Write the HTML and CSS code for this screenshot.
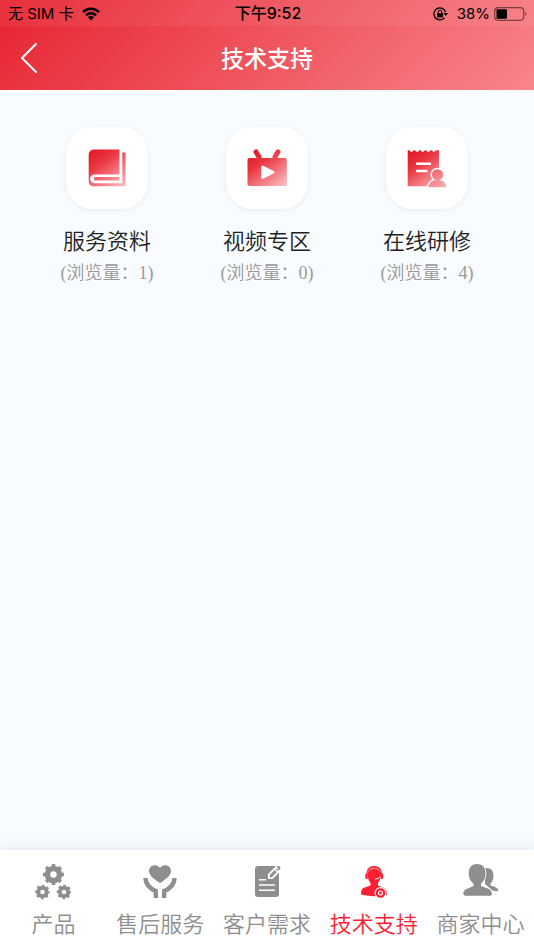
FILE: index.html
```html
<!DOCTYPE html>
<html lang="zh-CN">
<head>
<meta charset="utf-8">
<meta name="viewport" content="width=device-width, initial-scale=1">
<title>技术支持</title>
<link rel="stylesheet" href="styles.css">
</head>
<body>
<header class="header">
  <div class="status">
    <div class="status-side">
      <span>无 SIM 卡</span>
      <svg width="18" height="14" viewBox="0 0 18 14" aria-hidden="true">
        <g fill="none" stroke="#000" stroke-width="2.6">
          <path d="M1 5.2C5.5.6 12.5.6 17 5.2"/>
          <path d="M4 8.4C6.8 5.6 11.2 5.6 14 8.4"/>
        </g>
        <path d="M5.9 10.3C7.7 8.7 10.3 8.7 12.1 10.3L9 13.4Z"/>
      </svg>
    </div>
    <time class="status-time">下午9:52</time>
    <div class="status-side status-right">
      <svg class="lock" width="15" height="14" viewBox="0 0 15 14" aria-hidden="true">
        <path d="M12.6 5A6 6 0 1 0 11.5 10.8" fill="none" stroke="#000" stroke-width="1.3"/>
        <path d="M10.2 6H15L12.7 9Z"/>
        <rect x="4" y="6.2" width="6" height="4.2" rx=".5"/>
        <path d="M5.2 6.5V5a1.8 1.8 0 0 1 3.6 0V6.5" fill="none" stroke="#000"/>
      </svg>
      <span>38%</span>
      <svg width="34" height="14" viewBox="0 0 34 14" aria-hidden="true">
        <rect x=".7" y=".7" width="29" height="12.6" rx="3.5" fill="none" stroke="#000" stroke-opacity=".5" stroke-width="1.2"/>
        <rect x="2.5" y="2.3" width="10.5" height="9.4" rx="1"/>
        <path d="M31.3 4.5q2 2.5 0 5z" fill-opacity=".5"/>
      </svg>
    </div>
  </div>
  <div class="titlebar">
    <button class="back" type="button" aria-label="返回">
      <svg width="18" height="32" viewBox="0 0 18 32" aria-hidden="true"><path d="M16 2 2 16 16 30" fill="none" stroke="#fff" stroke-width="2" stroke-linecap="round" stroke-linejoin="round"/></svg>
    </button>
    <h1 class="title">技术支持</h1>
  </div>
</header>

<main class="main">
  <svg class="defs" width="0" height="0" aria-hidden="true">
    <defs>
      <linearGradient id="red" gradientUnits="userSpaceOnUse" x1="6" y1="4" x2="32" y2="40">
        <stop offset="0" stop-color="#e51c29"/><stop offset=".3" stop-color="#e93641"/><stop offset="1" stop-color="#fcb5ba"/>
      </linearGradient>
      <linearGradient id="person" gradientUnits="userSpaceOnUse" x1="26" y1="22" x2="36" y2="40">
        <stop offset="0" stop-color="#f0656e"/><stop offset="1" stop-color="#fbacb2"/>
      </linearGradient>
      <g id="gear">
        <circle r="6.3" fill="none" stroke="currentColor" stroke-width="5.8"/>
        <circle r="9.2" fill="none" stroke="currentColor" stroke-width="3.6" pathLength="16" stroke-dasharray="1 1" stroke-dashoffset=".5"/>
      </g>
    </defs>
  </svg>
  <a class="entry" href="#docs">
    <span class="tile">
      <svg width="40" height="40" viewBox="0 0 40 40" aria-hidden="true">
        <path fill="url(#red)" d="M6.5 1.5H32.5V26.5H7.5a4.3 4.3 0 0 0 0 8.7H35.3V4.5H38.5V38.3H6.5A4.8 4.8 0 0 1 1.7 33.5V6.5A5 5 0 0 1 6.5 1.5Z"/>
        <path fill="url(#red)" d="M8.5 29H32.5V32.5H8.5a1.7 1.7 0 0 1 0-3.5Z"/>
      </svg>
    </span>
    <span class="name">服务资料</span>
    <span class="count">(浏览量：1)</span>
  </a>
  <a class="entry" href="#video">
    <span class="tile">
      <svg width="40" height="40" viewBox="0 0 40 40" aria-hidden="true">
        <path fill="none" stroke="url(#red)" stroke-width="5" stroke-linecap="round" d="M9 4 12 9M31 4 28 9"/>
        <path fill="url(#red)" fill-rule="evenodd" d="M2.5 10H37.8a2 2 0 0 1 2 2V36a2 2 0 0 1-2 2H2.5a2 2 0 0 1-2-2V12a2 2 0 0 1 2-2ZM16.3 17.8Q14.3 16.8 14.3 19V29.5Q14.3 31.7 16.3 30.8L26.5 25.5Q28.5 24.3 26.5 23Z"/>
      </svg>
    </span>
    <span class="name">视频专区</span>
    <span class="count">(浏览量：0)</span>
  </a>
  <a class="entry" href="#training">
    <span class="tile">
      <svg width="40" height="40" viewBox="0 0 40 40" aria-hidden="true">
        <path fill="url(#red)" d="M.7 2.2H2.5q1.8 3.4 4.3 0h1.2q1.9 3.4 4.3 0h1.3q2 3.4 4.3 0h1.3q2 3.4 4.3 0h1.3q2 3.4 4.3 0H32V38.3H.7Z"/>
        <path fill="none" stroke="#fff" stroke-width="2.4" stroke-linecap="round" d="M10 15.7H23M10 23H19.5"/>
        <g fill="#fff" stroke="#fff" stroke-width="3">
          <path d="M21.3 39.3Q21.8 34.5 27 32.3L30.5 33.5 34 32.3Q38.8 34.5 39.2 39.3Z"/>
          <circle cx="30.5" cy="26.8" r="5.6"/>
        </g>
        <g fill="url(#person)">
          <path d="M21.3 39.3Q21.8 34 27.5 32.3H33.5Q38.8 34 39.2 39.3Z"/>
          <circle cx="30.5" cy="26.8" r="5.6"/>
        </g>
      </svg>
    </span>
    <span class="name">在线研修</span>
    <span class="count">(浏览量：4)</span>
  </a>
</main>

<nav class="tabs">
  <a class="tab" href="#products">
    <svg width="36" height="36" viewBox="0 0 36 36" aria-hidden="true">
      <use href="#gear" transform="translate(18.5 10.5) scale(.95)"/>
      <use href="#gear" transform="translate(7.5 28) scale(.67)"/>
      <use href="#gear" transform="translate(29 28) scale(.67)"/>
    </svg>
    <span>产品</span>
  </a>
  <a class="tab" href="#service">
    <svg width="36" height="36" viewBox="0 0 36 36" aria-hidden="true">
      <path fill="currentColor" d="M18 19.3C14 15.8 7 12.5 7 7C7 1 15 -.8 18 4C21 -.8 29 1 29 7C29 12.5 22 15.8 18 19.3Z"/>
      <path fill="none" stroke="currentColor" stroke-width="4.4" d="M3.3 14C3.8 20 7.5 24.5 13.8 27V34M32.7 14C32.2 20 28.5 24.5 22.2 27V34"/>
    </svg>
    <span>售后服务</span>
  </a>
  <a class="tab" href="#needs">
    <svg width="36" height="36" viewBox="0 0 36 36" aria-hidden="true">
      <rect x="6" y="2" width="24" height="31" rx="3" fill="currentColor"/>
      <path fill="none" stroke="#fff" stroke-width="1.6" d="M10 15.7H17M10 21H26M10 26.2H26"/>
      <path fill="currentColor" stroke="#fff" stroke-width="1.8" stroke-linejoin="round" d="M19.8 14.2V10.7L27.5 2.8 31 6.2 23.5 13.8Z"/>
      <path stroke="#fff" stroke-width="1.3" d="M25 4.5 29.5 8.8"/>
      <path fill="currentColor" d="M27.7 3.3 28.9 2.2Q30 1.8 31 3 31.7 4 31.2 5L30.3 6Z"/>
    </svg>
    <span>客户需求</span>
  </a>
  <a class="tab active" href="#support" aria-current="page">
    <svg width="36" height="36" viewBox="0 0 36 36" aria-hidden="true">
      <path fill="currentColor" d="M11.5 9C11.5 4.5 14 3 18.2 3S25 4.5 25 9C25 14 23.5 17.5 22 19V21.5L28 24Q31 25.5 31 31Q18 33.5 5 30.5Q4.8 25 8 23.8L14.5 21.5V19C13 17.500 11.5 14 11.5 9Z"/>
      <path fill="none" stroke="#fff" stroke-opacity=".7" stroke-width=".8" d="M12.500 7.500Q14 4.300 18.200 4.300T24 7.500"/>
      <path fill="none" stroke="#fff" stroke-width="1" d="M24.300 12.500Q23 15.200 19 15"/>
      <path fill="none" stroke="currentColor" stroke-width="1" d="M11 9.500Q11 2.500 18.200 2.500T25.500 9.500"/>
      <path stroke="currentColor" stroke-width="2.300" stroke-linecap="round" d="M10.500 10.500V14M26 10.500V14"/>
      <circle cx="24.500" cy="29" r="6" fill="#fff"/>
      <circle cx="24.500" cy="29" r="3.700" fill="#fff" stroke="currentColor" stroke-width="2.300"/>
      <circle cx="24.500" cy="29" r="1.400" fill="currentColor"/>
    </svg>
    <span>技术支持</span>
  </a>
  <a class="tab" href="#merchant">
    <svg width="36" height="36" viewBox="0 0 36 36" aria-hidden="true">
      <path fill="currentColor" d="M22 4Q30.500 3 30.500 11.500Q30.500 17 27.500 19.500V21.500Q35.500 23.500 35.300 26.500Q34.800 28 29.500 26.500L22 20Z"/>
      <path fill="currentColor" stroke="#fff" stroke-width="1.600" paint-order="stroke" d="M14 0C20 0 22.500 4 22.500 9.500C22.500 14.500 20.500 17.500 18 19.500V22L26 25Q29 26.500 29 30.500Q28.500 31.700 27 31.700H2Q.300 31.500.300 29.500Q.500 26.300 3.500 25L10.500 22V19.500C8 17.500 5.700 14.500 5.700 9.500C5.700 4 8 0 14 0Z"/>
    </svg>
    <span>商家中心</span>
  </a>
</nav>
</body>
</html>
```
FILE: styles.css
```css
* {
  box-sizing: border-box;
}

body {
  margin: 0;
  min-height: 100vh;
  display: flex;
  flex-direction: column;
  background: #f8fcff;
  font-family: "Noto Sans CJK SC", sans-serif;
}

a {
  color: inherit;
  text-decoration: none;
}

svg {
  display: block;
  flex: none;
}

.header {
  background: linear-gradient(135deg, #e72430, #f8858b);
}

.status {
  display: grid;
  grid-template-columns: 1fr auto 1fr;
  align-items: center;
  height: 26px;
  padding: 1px 6px 0 8px;
  background: rgba(255, 255, 255, 0.06);
  font-family: Inter, "Noto Sans CJK SC", sans-serif;
  font-size: 15px;
  line-height: 25px;
}

.status-side {
  display: flex;
  align-items: center;
  gap: 8px;
}

.status-right {
  justify-content: flex-end;
  gap: 4px;
}

.lock {
  margin-right: 5px;
}

.status-time {
  font-size: 16px;
  font-weight: 500;
}

.titlebar {
  display: grid;
  grid-template-columns: 60px 1fr 60px;
  align-items: center;
  height: 64px;
}

.back {
  display: flex;
  align-items: center;
  height: 64px;
  padding: 0 20px;
  border: 0;
  background: none;
}

.title {
  margin: 0;
  padding-bottom: 2px;
  color: #fff;
  font-size: 23px;
  font-weight: 500;
  line-height: 32px;
  text-align: center;
}

.main {
  flex: 1;
  display: grid;
  grid-template-columns: repeat(3, 1fr);
  align-content: start;
  padding: 37px 27px;
}

.defs {
  position: absolute;
}

.entry {
  display: flex;
  flex-direction: column;
  align-items: center;
}

.tile {
  display: grid;
  place-items: center;
  width: 82px;
  height: 82px;
  margin-bottom: 14px;
  border-radius: 26px;
  background: #fff;
  box-shadow: 0 1px 4px rgba(60, 80, 100, 0.1);
}

.name {
  margin-bottom: 2px;
  color: #222;
  font-size: 22px;
  font-weight: 350;
  line-height: 32px;
}

.count {
  color: #999;
  font-family: "Liberation Serif", "Noto Sans CJK SC", serif;
  font-size: 18px;
  font-weight: 350;
  line-height: 32px;
}

.tabs {
  display: grid;
  grid-template-columns: repeat(5, 1fr);
  padding: 14px 0 12px;
  background: #fff;
  box-shadow: 0 0 16px rgba(60, 80, 100, 0.14);
  color: #8e8e8e;
}

.tab {
  display: flex;
  flex-direction: column;
  align-items: center;
  gap: 6px;
  font-size: 22px;
  font-weight: 350;
  line-height: 32px;
  white-space: nowrap;
}

.active {
  color: #fc1f33;
}
```
